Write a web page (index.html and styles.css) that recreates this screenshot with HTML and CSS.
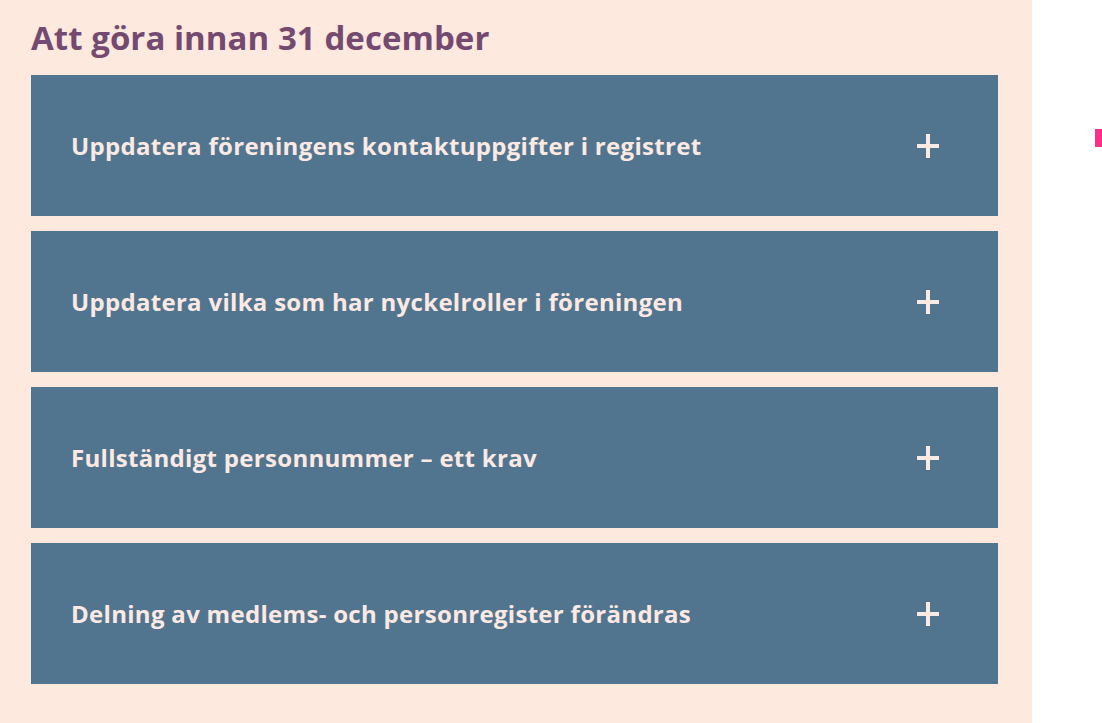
FILE: index.html
```html
<!DOCTYPE html>
<html lang="sv">
<head>
<meta charset="utf-8">
<title>Att göra innan 31 december</title>
<link rel="stylesheet" href="styles.css">
</head>
<body>
<div class="page">
  <section class="panel">
    <h2 class="title">Att göra innan 31 december</h2>
    <div class="accordion">
      <div class="item"><span class="label">Uppdatera föreningens kontaktuppgifter i registret</span><span class="plus"></span></div>
      <div class="item"><span class="label">Uppdatera vilka som har nyckelroller i föreningen</span><span class="plus"></span></div>
      <div class="item"><span class="label">Fullständigt personnummer – ett krav</span><span class="plus"></span></div>
      <div class="item"><span class="label">Delning av medlems- och personregister förändras</span><span class="plus"></span></div>
    </div>
  </section>
  <span class="marker"></span>
</div>
</body>
</html>
```
FILE: styles.css
```css
html, body {
  margin: 0;
  padding: 0;
  background: #ffffff;
}
.page {
  position: relative;
  width: 1102px;
  height: 723px;
  overflow: hidden;
}
.panel {
  width: 1032px;
  height: 723px;
  box-sizing: border-box;
  background: #fee9df;
  padding: 16px 34px 0 31px;
}
.title {
  margin: 0 0 16px 0;
  font-family: "Open Sans", Lato, sans-serif;
  font-weight: 700;
  font-size: 33px;
  line-height: 43px;
  color: #744a70;
  letter-spacing: 0.05px;
}
.accordion {
  display: flex;
  flex-direction: column;
  gap: 15px;
}
.item {
  height: 141px;
  background: #52758f;
  display: flex;
  align-items: center;
  justify-content: space-between;
  padding: 0 59px 0 40px;
}
.label {
  font-family: "Open Sans", Lato, sans-serif;
  font-weight: 700;
  font-size: 24px;
  letter-spacing: 0.3px;
  color: #fde9e3;
}
.plus {
  position: relative;
  width: 22px;
  height: 24px;
}
.plus::before, .plus::after {
  content: "";
  position: absolute;
  background: #fde9e3;
}
.plus::before {
  left: 0;
  right: 0;
  top: 10px;
  height: 4px;
}
.plus::after {
  top: 0;
  bottom: 0;
  left: 9px;
  width: 4px;
}
.marker {
  position: absolute;
  left: 1095px;
  top: 129px;
  width: 7px;
  height: 18px;
  background: #ff2e88;
}
```
